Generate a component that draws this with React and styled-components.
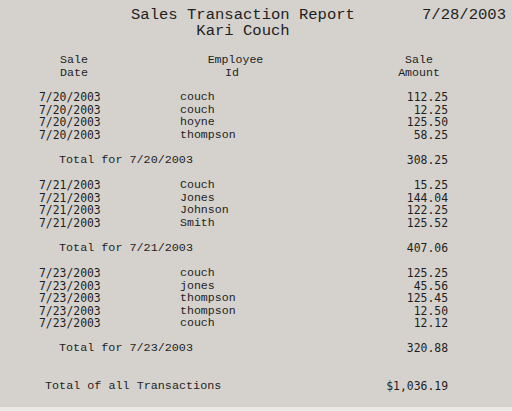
import React from "react";
import styled, { createGlobalStyle } from "styled-components";

const LINE = 12.55;

const GlobalStyle = createGlobalStyle`
  html, body {
    margin: 0;
    padding: 0;
    background: #ebe9e5;
  }
`;

const Report = styled.div`
  width: 512px;
  height: 407px;
  box-sizing: border-box;
  padding-top: 7px;
  background: #d5d2cd;
  color: #1e1e1e;
  overflow: hidden;
`;

const TitleBar = styled.div`
  display: flex;
  align-items: flex-start;
  padding-left: 131px;
  gap: 67px;
  font-family: "Liberation Mono", "Courier New", monospace;
  font-size: 15.55px;
  line-height: 16px;
`;

const TitleBlock = styled.div`
  width: 224px;
  text-align: center;
  white-space: pre;
`;

const ColumnHeads = styled.div`
  display: grid;
  grid-template-columns: 70px 253px 114px;
  padding-left: 39px;
  margin-top: 15.25px;
  margin-bottom: 12px;
  font-family: "Liberation Mono", "Courier New", monospace;
  font-size: 11.6px;
  line-height: ${LINE}px;
  text-align: center;
  white-space: pre;
`;

const Group = styled.div`
  margin-bottom: ${LINE}px;
`;

const Row = styled.div`
  display: grid;
  grid-template-columns: 141px 1fr auto;
  padding: 0 64px 0 39px;
  height: ${LINE}px;
  line-height: ${LINE}px;
  white-space: pre;
`;

const DateCell = styled.span`
  font-family: "DejaVu Sans Mono", "Lucida Console", monospace;
  font-size: 11.4px;
`;

const NameCell = styled.span`
  font-family: "Liberation Mono", "Courier New", monospace;
  font-size: 11.6px;
`;

const AmountCell = styled.span`
  font-family: "DejaVu Sans Mono", "Lucida Console", monospace;
  font-size: 11.4px;
  text-align: right;
`;

const TotalRow = styled.div`
  display: flex;
  justify-content: space-between;
  padding: 0 64px 0 ${(p) => p.$indent}px;
  margin-top: ${(p) => p.$gap}px;
  height: ${LINE}px;
  line-height: ${LINE}px;
  white-space: pre;
`;

const TotalLabel = styled.span`
  font-family: "Liberation Mono", "Courier New", monospace;
  font-size: 11.75px;
`;

const groups = [
  {
    date: "7/20/2003",
    total: "308.25",
    rows: [
      ["couch", "112.25"],
      ["couch", "12.25"],
      ["hoyne", "125.50"],
      ["thompson", "58.25"],
    ],
  },
  {
    date: "7/21/2003",
    total: "407.06",
    rows: [
      ["Couch", "15.25"],
      ["Jones", "144.04"],
      ["Johnson", "122.25"],
      ["Smith", "125.52"],
    ],
  },
  {
    date: "7/23/2003",
    total: "320.88",
    rows: [
      ["couch", "125.25"],
      ["jones", "45.56"],
      ["thompson", "125.45"],
      ["thompson", "12.50"],
      ["couch", "12.12"],
    ],
  },
];

export default function App() {
  return (
    <>
      <GlobalStyle />
      <Report>
        <TitleBar>
          <TitleBlock>
            <div>Sales Transaction Report</div>
            <div>Kari Couch</div>
          </TitleBlock>
          <div>7/28/2003</div>
        </TitleBar>

        <ColumnHeads>
          <div>{"Sale\nDate"}</div>
          <div>{"Employee\nId "}</div>
          <div>{"Sale\nAmount"}</div>
        </ColumnHeads>

        {groups.map((g) => (
          <Group key={g.date}>
            {g.rows.map(([name, amount], i) => (
              <Row key={i}>
                <DateCell>{g.date}</DateCell>
                <NameCell>{name}</NameCell>
                <AmountCell>{amount}</AmountCell>
              </Row>
            ))}
            <TotalRow $indent={59} $gap={LINE}>
              <TotalLabel>Total for {g.date}</TotalLabel>
              <AmountCell>{g.total}</AmountCell>
            </TotalRow>
          </Group>
        ))}

        <TotalRow $indent={45} $gap={LINE * 2}>
          <TotalLabel>Total of all Transactions</TotalLabel>
          <AmountCell>$1,036.19</AmountCell>
        </TotalRow>
      </Report>
    </>
  );
}
